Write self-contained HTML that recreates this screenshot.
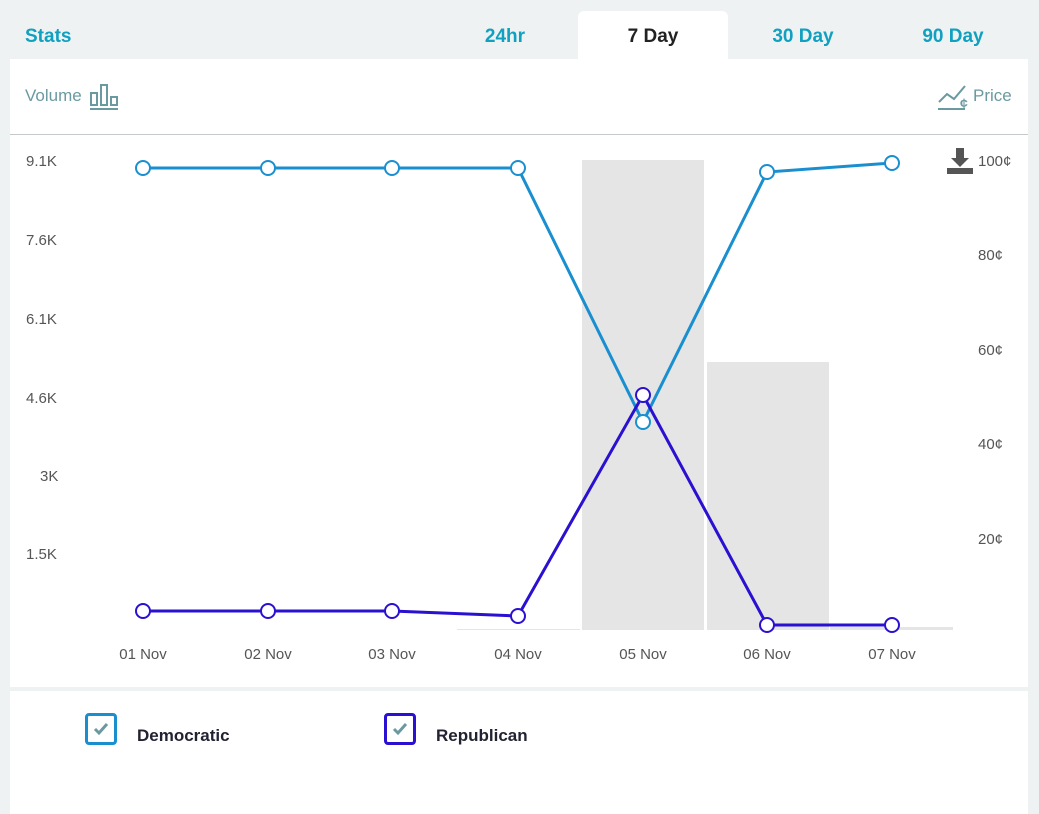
<!DOCTYPE html>
<html><head><style>
body{margin:0;width:1039px;height:814px;background:#eef2f3;font-family:"Liberation Sans",sans-serif;position:relative;overflow:hidden}
.tab{position:absolute;top:11px;height:48px;line-height:52px;font-weight:bold;font-size:19px;color:#10a0c0;text-align:center}
.act{background:#fff;color:#222;border-radius:6px 6px 0 0}
.panel{position:absolute;left:10px;top:59px;width:1018px;height:628px;background:#fff}
.legend{position:absolute;left:10px;top:691px;width:1018px;height:123px;background:#fff}
.cb{position:absolute;width:32px;height:32px;border:3px solid;border-radius:4px;box-sizing:border-box}
.ln{position:absolute;font-weight:bold;font-size:17px;color:#223}
</style></head><body>
<div class="tab" style="left:10px;width:80px;text-align:left;padding-left:15px">Stats</div>
<div class="tab" style="left:430px;width:150px">24hr</div>
<div class="tab act" style="left:578px;width:150px">7 Day</div>
<div class="tab" style="left:728px;width:150px">30 Day</div>
<div class="tab" style="left:878px;width:150px">90 Day</div>
<div class="panel"></div>
<div style="position:absolute;left:10px;top:134px;width:1018px;height:1px;background:#c4c9cb"></div>
<div style="position:absolute;left:25px;top:86px;font-size:17px;color:#6a9aa0">Volume</div>
<svg style="position:absolute;left:89px;top:83px" width="30" height="28"><g fill="none" stroke="#6a9aa0" stroke-width="2"><rect x="2" y="10" width="6" height="12"/><rect x="12" y="2" width="6" height="20"/><rect x="22" y="14" width="6" height="8"/><line x1="1" y1="26" x2="29" y2="26"/></g></svg>
<svg style="position:absolute;left:937px;top:82px" width="34" height="30"><g fill="none" stroke="#6a9aa0" stroke-width="2"><polyline points="2,20 10,12 17,17 28,4"/><line x1="1" y1="27" x2="28" y2="27"/></g><text x="23" y="26" font-size="14" font-weight="bold" fill="#6a9aa0" font-family="Liberation Sans">¢</text></svg>
<div style="position:absolute;left:973px;top:86px;font-size:17px;color:#6a9aa0">Price</div>
<svg style="position:absolute;left:0;top:0" width="1039" height="690">
<g fill="#e5e5e5"><rect x="582" y="160" width="122" height="470"/><rect x="707" y="362" width="122" height="268"/><rect x="830" y="627" width="123" height="3"/><rect x="457" y="629" width="123" height="1"/></g>
<g fill="#555"><rect x="947" y="168" width="26" height="6"/><path d="M956 148h8v10h5l-9 9-9-9h5z"/></g>
<polyline fill="none" stroke="#1a8fd0" stroke-width="3" points="143,168 268,168 392,168 518,168 643,422 767,172 892,163"/>
<polyline fill="none" stroke="#2a10d0" stroke-width="3" points="143,611 268,611 392,611 518,616 643,395 767,625 892,625"/>
<g fill="#fff" stroke="#1a8fd0" stroke-width="2"><circle cx="143" cy="168" r="7"/><circle cx="268" cy="168" r="7"/><circle cx="392" cy="168" r="7"/><circle cx="518" cy="168" r="7"/><circle cx="643" cy="422" r="7"/><circle cx="767" cy="172" r="7"/><circle cx="892" cy="163" r="7"/></g>
<g fill="#fff" stroke="#2a10d0" stroke-width="2"><circle cx="143" cy="611" r="7"/><circle cx="268" cy="611" r="7"/><circle cx="392" cy="611" r="7"/><circle cx="518" cy="616" r="7"/><circle cx="643" cy="395" r="7"/><circle cx="767" cy="625" r="7"/><circle cx="892" cy="625" r="7"/></g>
<g font-family="Liberation Sans" font-size="15" fill="#555">
<text x="26" y="166">9.1K</text><text x="26" y="245">7.6K</text><text x="26" y="324">6.1K</text><text x="26" y="403">4.6K</text><text x="40" y="481">3K</text><text x="26" y="559">1.5K</text>
<text x="978" y="166">100¢</text><text x="978" y="260">80¢</text><text x="978" y="355">60¢</text><text x="978" y="449">40¢</text><text x="978" y="544">20¢</text>
<g text-anchor="middle"><text x="143" y="659">01 Nov</text><text x="268" y="659">02 Nov</text><text x="392" y="659">03 Nov</text><text x="518" y="659">04 Nov</text><text x="643" y="659">05 Nov</text><text x="767" y="659">06 Nov</text><text x="892" y="659">07 Nov</text></g>
</g></svg>
<div class="legend"></div>
<div class="cb" style="left:85px;top:713px;border-color:#1a8fd0"></div>
<div class="cb" style="left:384px;top:713px;border-color:#2a10d0"></div>
<svg style="position:absolute;left:93px;top:721px" width="16" height="16"><polyline points="2,8 6,12 14,3" fill="none" stroke="#6a9aa0" stroke-width="3"/></svg>
<svg style="position:absolute;left:392px;top:721px" width="16" height="16"><polyline points="2,8 6,12 14,3" fill="none" stroke="#6a9aa0" stroke-width="3"/></svg>
<div class="ln" style="left:137px;top:726px">Democratic</div>
<div class="ln" style="left:436px;top:726px">Republican</div>
</body></html>
